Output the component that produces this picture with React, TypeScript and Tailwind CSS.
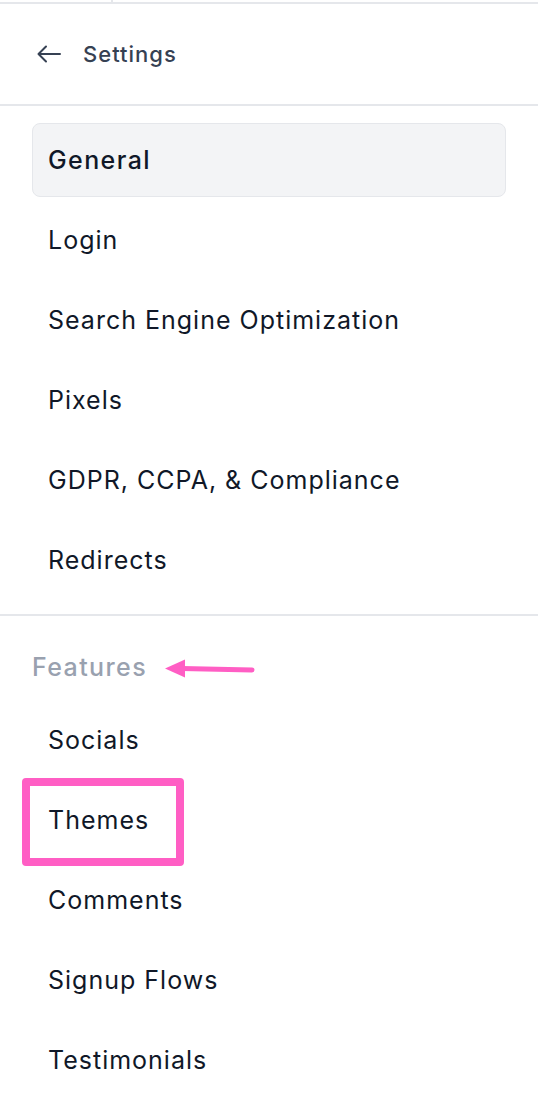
const mainItems = [
  "General",
  "Login",
  "Search Engine Optimization",
  "Pixels",
  "GDPR, CCPA, & Compliance",
  "Redirects",
];

const featureItems = ["Socials", "Themes", "Comments", "Signup Flows", "Testimonials"];

function NavItem({ label, active }: { label: string; active?: boolean }) {
  return (
    <div
      className={
        active
          ? "h-[74px] flex items-center px-[15px] pt-[2px] rounded-lg border border-gray-200 bg-gray-100 text-[25px] tracking-[1.4px] font-medium text-gray-900"
          : "h-[74px] flex items-center px-[15px] pt-[2px] rounded-lg border border-transparent text-[25px] tracking-[1px] text-gray-900"
      }
    >
      {label}
    </div>
  );
}

export default function App() {
  return (
    <div
      className="relative w-[538px] h-[1112px] overflow-hidden bg-white"
      style={{ fontFamily: "Inter, 'Noto Sans', sans-serif" }}
    >
      {/* remnant of the bar above */}
      <div className="flex h-[4px] border-b-2 border-gray-200">
        <div className="w-[113px] border-r-2 border-gray-200" />
      </div>

      {/* Header */}
      <div className="h-[102px] flex items-center gap-[22px] pl-[37px] border-b-2 border-gray-200 text-gray-700">
        <svg
          width="24"
          height="18"
          viewBox="0 0 24 18"
          fill="none"
          stroke="currentColor"
          strokeWidth="2"
          strokeLinecap="round"
          strokeLinejoin="round"
          aria-hidden="true"
        >
          <path d="M23 9H1.5M9 1.5L1.5 9L9 16.5" />
        </svg>
        <span className="text-[22px] font-medium tracking-[1px]">Settings</span>
      </div>

      {/* Main section */}
      <div className="flex flex-col gap-[6px] px-8 pt-[17px] pb-[17px] border-b-2 border-gray-200">
        {mainItems.map((item, i) => (
          <NavItem key={item} label={item} active={i === 0} />
        ))}
      </div>

      {/* Features section */}
      <div className="px-8 pt-[36px]">
        <div className="relative h-[32px] flex items-center text-[25px] tracking-[1.4px] font-medium text-gray-400">
          Features
          <svg
            className="absolute left-[132px] top-[6px]"
            width="92"
            height="22"
            viewBox="0 0 92 22"
            aria-hidden="true"
          >
            <path d="M1 10.5 L21 1.5 L21 19.5 Z" fill="#ff5ec4" />
            <path d="M18 10.5 L88 12" stroke="#ff5ec4" strokeWidth="5" strokeLinecap="round" />
          </svg>
        </div>
        <div className="flex flex-col gap-[6px] mt-[19px]">
          {featureItems.map((item) => (
            <NavItem key={item} label={item} />
          ))}
        </div>
      </div>

      {/* Highlight box */}
      <div className="absolute left-[22px] top-[778px] w-[162px] h-[88px] border-[8px] border-[#ff5ec4] rounded-[4px]" />
    </div>
  );
}
